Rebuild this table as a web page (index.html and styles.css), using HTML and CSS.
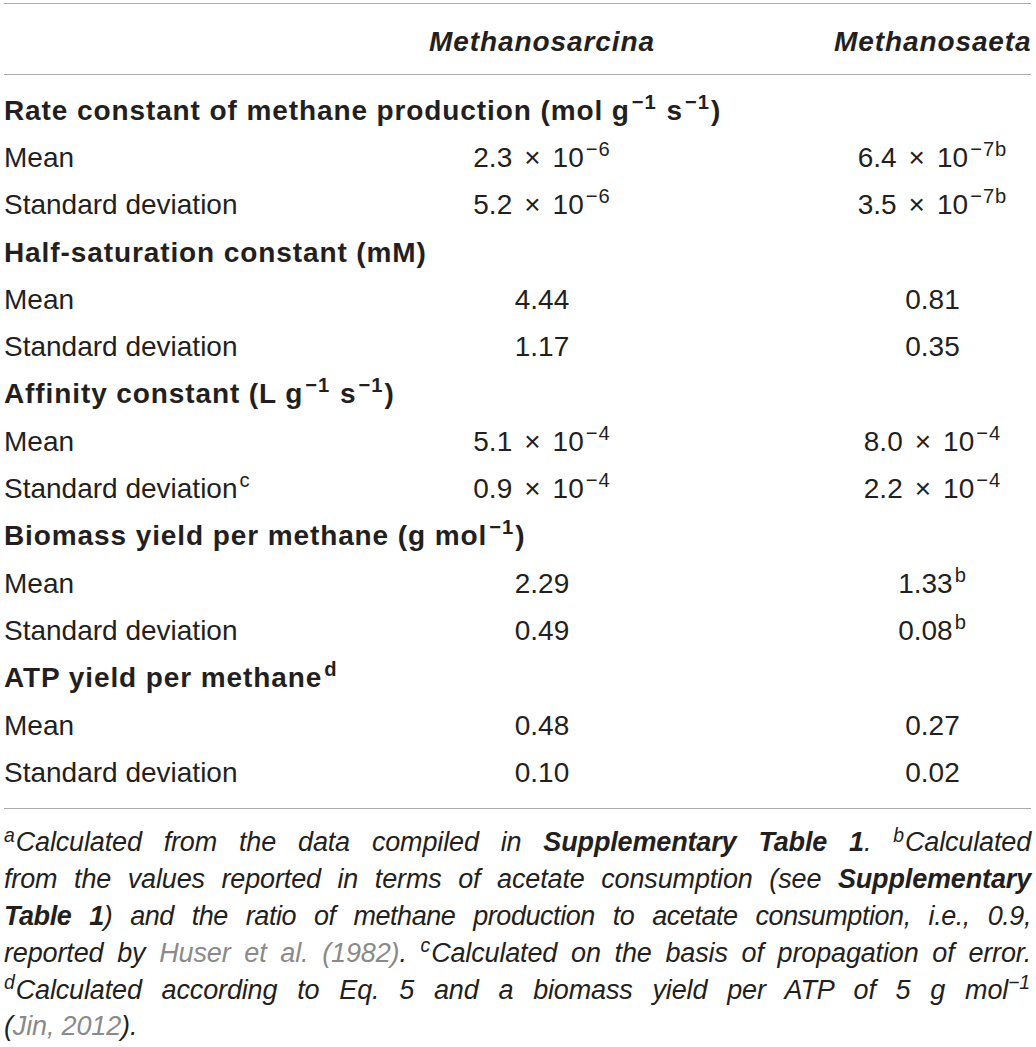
FILE: index.html
```html
<!DOCTYPE html>
<html lang="en">
<head>
    <meta charset="UTF-8">
    <title>Methanogen kinetic parameters</title>
    <link rel="stylesheet" href="styles.css">
</head>
<body>
    <div class="table-wrap">
        <table class="params">
            <colgroup>
                <col class="col-label">
                <col class="col-sarcina">
                <col class="col-saeta">
            </colgroup>
            <thead>
                <tr>
                    <th></th>
                    <th class="species sarcina">Methanosarcina</th>
                    <th class="species">Methanosaeta</th>
                </tr>
            </thead>
            <tbody>
                <tr class="first"><td class="group" colspan="3">Rate constant of methane production (mol g<sup>−1</sup> s<sup>−1</sup>)</td></tr>
                <tr><td>Mean</td><td class="num sarcina">2.3<span class="x">×</span>10<sup>−6</sup></td><td class="num">6.4<span class="x">×</span>10<sup>−7b</sup></td></tr>
                <tr><td>Standard deviation</td><td class="num sarcina">5.2<span class="x">×</span>10<sup>−6</sup></td><td class="num">3.5<span class="x">×</span>10<sup>−7b</sup></td></tr>

                <tr><td class="group" colspan="3">Half-saturation constant (mM)</td></tr>
                <tr><td>Mean</td><td class="num sarcina">4.44</td><td class="num">0.81</td></tr>
                <tr><td>Standard deviation</td><td class="num sarcina">1.17</td><td class="num">0.35</td></tr>

                <tr><td class="group" colspan="3">Affinity constant (L g<sup>−1</sup> s<sup>−1</sup>)</td></tr>
                <tr><td>Mean</td><td class="num sarcina">5.1<span class="x">×</span>10<sup>−4</sup></td><td class="num">8.0<span class="x">×</span>10<sup>−4</sup></td></tr>
                <tr><td>Standard deviation<sup>c</sup></td><td class="num sarcina">0.9<span class="x">×</span>10<sup>−4</sup></td><td class="num">2.2<span class="x">×</span>10<sup>−4</sup></td></tr>

                <tr><td class="group" colspan="3">Biomass yield per methane (g mol<sup>−1</sup>)</td></tr>
                <tr><td>Mean</td><td class="num sarcina">2.29</td><td class="num">1.33<sup>b</sup></td></tr>
                <tr><td>Standard deviation</td><td class="num sarcina">0.49</td><td class="num">0.08<sup>b</sup></td></tr>

                <tr><td class="group" colspan="3">ATP yield per methane<sup>d</sup></td></tr>
                <tr><td>Mean</td><td class="num sarcina">0.48</td><td class="num">0.27</td></tr>
                <tr class="last"><td>Standard deviation</td><td class="num sarcina">0.10</td><td class="num">0.02</td></tr>
            </tbody>
        </table>

        <p class="notes">
            <span class="line"><sup>a</sup>Calculated from the data compiled in <b>Supplementary Table 1</b>. <sup>b</sup>Calculated</span>
            <span class="line">from the values reported in terms of acetate consumption (see <b>Supplementary</b></span>
            <span class="line tight"><b>Table 1</b>) and the ratio of methane production to acetate consumption, i.e., 0.9,</span>
            <span class="line">reported by <a href="#">Huser et al. (1982)</a>. <sup>c</sup>Calculated on the basis of propagation of error.</span>
            <span class="line"><sup>d</sup>Calculated according to Eq. 5 and a biomass yield per ATP of 5 g mol<sup>−1</sup></span>
            <span class="line end">(<a href="#">Jin, 2012</a>).</span>
        </p>
    </div>
</body>
</html>
```

FILE: styles.css
```css
:root {
    --text-color: #231f20;
    --rule-color: #ababab;
    --link-color: #8a8a8a;
}

body {
    margin: 0;
    background-color: #fff;
    color: var(--text-color);
    font-family: 'Liberation Sans', Arial, sans-serif;
}

.table-wrap {
    margin: 3px 5px 0 4px;
}

.params {
    width: 100%;
    border-collapse: collapse;
    table-layout: fixed;
    font-size: 28px;
}

.col-label { width: 416px; }
.col-sarcina { width: 414px; }

.params thead tr {
    border-top: 1px solid var(--rule-color);
    border-bottom: 1px solid var(--rule-color);
}

.params th {
    height: 64px;
    padding: 6px 0 0 0;
    font-weight: 700;
    font-style: italic;
    letter-spacing: 0.9px;
    text-align: center;
    vertical-align: middle;
}

.params td {
    height: 47.3px;
    padding: 0;
    vertical-align: middle;
    white-space: nowrap;
}

.params tbody tr.first td { padding-top: 12px; }
.params tbody tr.last td { padding-bottom: 12px; }
.params tbody tr.last { border-bottom: 1px solid var(--rule-color); }

.params .group {
    font-weight: 700;
    letter-spacing: 0.9px;
}

.params .num {
    text-align: center;
}

.params .x {
    margin: 0 12px 0 12px;
}

/* the middle column has empty room on its right */
.params .sarcina {
    padding-right: 170px;
}

.params sup {
    font-size: 0.72em;
    line-height: 0;
    vertical-align: 0.55em;
    margin-left: 2px;
    letter-spacing: 1px;
}

.params .group sup {
    margin: 0 1px 0 2px;
}

.notes {
    margin: 15px 0 0 0;
    font-size: 27px;
    line-height: 36.8px;
    font-style: italic;
    letter-spacing: -0.15px;
}

.notes .line {
    display: block;
    white-space: nowrap;
    text-align: justify;
    text-align-last: justify;
}

.notes .line.tight {
    letter-spacing: -0.45px;
}

.notes .line.end {
    text-align-last: left;
}

.notes sup {
    font-size: 0.72em;
    line-height: 0;
    vertical-align: 0.5em;
    margin-right: 1px;
}

.notes b {
    font-weight: 700;
}

.notes a {
    color: var(--link-color);
    text-decoration: none;
}
```
